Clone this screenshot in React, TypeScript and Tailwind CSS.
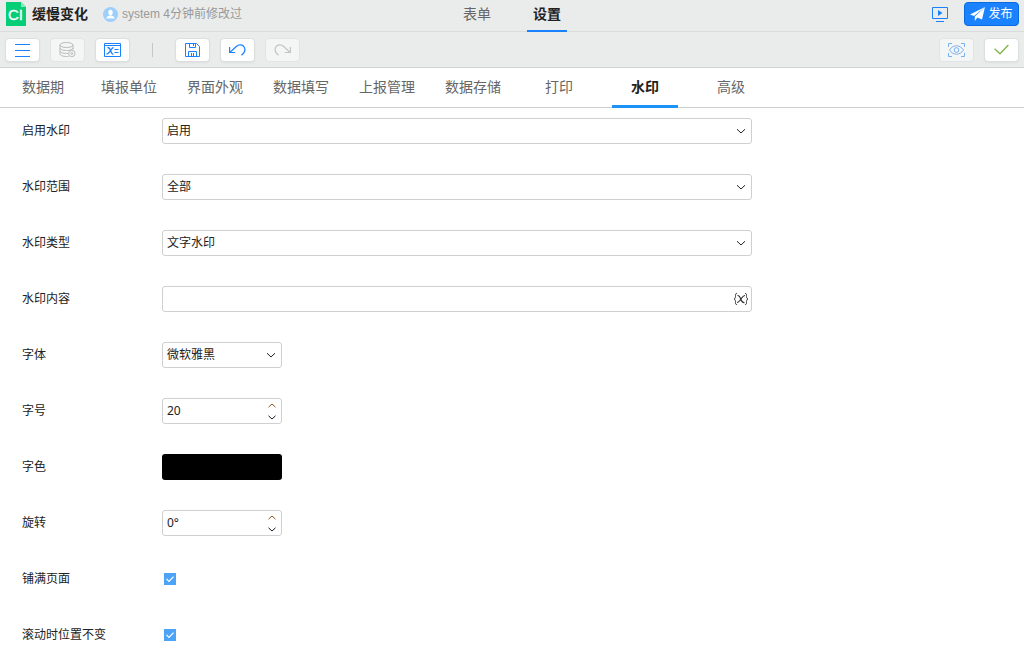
import React, { useState } from 'react';

const headerTabs = ['表单', '设置'];
const settingTabs = ['数据期', '填报单位', '界面外观', '数据填写', '上报管理', '数据存储', '打印', '水印', '高级'];

const ToolButton: React.FC<{ label: string; disabled?: boolean; children: React.ReactNode }> = ({ label, disabled, children }) => (
  <button
    type="button"
    aria-label={label}
    disabled={disabled}
    className={`flex h-6 w-[35px] items-center justify-center rounded-[4px] border ${
      disabled ? 'border-[#e1e4e3] bg-[#f4f6f5]' : 'border-[#dcdfde] bg-white shadow-xs'
    }`}
  >
    {children}
  </button>
);

const Row: React.FC<{ id: string; label: string; children: React.ReactNode }> = ({ id, label, children }) => (
  <div className="flex h-[26px] items-center">
    <label htmlFor={id} className="w-[140px] shrink-0">{label}</label>
    {children}
  </div>
);

const SelectBox: React.FC<{ id: string; options: string[]; narrow?: boolean }> = ({ id, options, narrow }) => (
  <div className={`relative h-[26px] w-full ${narrow ? 'max-w-[120px]' : 'max-w-[590px]'}`}>
    <select id={id} className="block h-full w-full appearance-none rounded-[3px] border border-[#cfcfcf] bg-white pl-1 pr-6 outline-none">
      {options.map((option) => <option key={option}>{option}</option>)}
    </select>
    <svg className="pointer-events-none absolute right-1.5 top-2.5" width="10" height="6" viewBox="0 0 10 6" fill="none" stroke="#222">
      <path d="M1 1.200l4 3.800 4-3.800" />
    </svg>
  </div>
);

const Spinner: React.FC<{ id: string; initial: number; unit?: string }> = ({ id, initial, unit = '' }) => {
  const [value, setValue] = useState(initial);
  return (
    <div className="flex h-[26px] w-[120px] rounded-[3px] border border-[#cfcfcf] bg-white">
      <input
        id={id}
        value={`${value}${unit}`}
        onChange={(e) => setValue(parseInt(e.target.value, 10) || 0)}
        className="w-full min-w-0 pl-1 outline-none"
      />
      <div className="flex w-[18px] shrink-0 flex-col">
        <button type="button" aria-label="增加" onClick={() => setValue(value + 1)} className="flex h-3 items-center justify-center">
          <svg width="8" height="5" viewBox="0 0 8 5" fill="none" stroke="#8a5a20"><path d="M.5 4.200L4 1l3.500 3.200" /></svg>
        </button>
        <button type="button" aria-label="减少" onClick={() => setValue(value - 1)} className="flex h-3 items-center justify-center">
          <svg width="8" height="5" viewBox="0 0 8 5" fill="none" stroke="#2a1530"><path d="M.5.8L4 4 7.500.8" /></svg>
        </button>
      </div>
    </div>
  );
};

const Tick: React.FC<{ id: string }> = ({ id }) => (
  <div className="relative ml-0.5 h-3 w-3">
    <input id={id} type="checkbox" defaultChecked className="peer block h-3 w-3 appearance-none border border-[#4da3f8] checked:bg-[#4da3f8]" />
    <svg className="pointer-events-none absolute inset-0 hidden peer-checked:block" width="12" height="12" viewBox="0 0 12 12" fill="none" stroke="#fff" strokeWidth="1.2">
      <path d="M2.500 5.800l2.500 2.500 4.500-4.600" />
    </svg>
  </div>
);

export default function App() {
  const [page, setPage] = useState('设置');
  const [tab, setTab] = useState('水印');

  return (
    <div className="min-h-screen bg-white font-['Noto_Sans','Noto_Sans_CJK_SC',sans-serif] text-xs text-[#222]">
      <header className="grid h-8 grid-cols-[1fr_auto_1fr] border-b border-[#dadcdb] bg-[#eaeceb]">
        <div className="flex items-center pb-1 pl-1.5">
          <svg width="20" height="24" viewBox="0 0 20 24" className="shrink-0">
            <path d="M0 0h15l5 5v19H0z" fill="#06ce76" />
            <path d="M15 0v5h5z" fill="#8be8bd" />
            <text x="2" y="18" fontSize="15" fill="#fff" stroke="#fff" strokeWidth=".3" fontFamily="Liberation Sans, sans-serif">CI</text>
          </svg>
          <h1 className="ml-1.5 text-sm leading-5 font-bold">缓慢变化</h1>
          <svg width="15" height="15" viewBox="0 0 15 15" className="ml-[15px] shrink-0">
            <circle cx="7.500" cy="7.500" r="7.500" fill="#9dcffc" />
            <ellipse cx="7.500" cy="5.500" rx="2.200" ry="2.700" fill="#fff" />
            <path d="M3.300 11.500c0-2 2-2.500 3.200-3h2c1.200.5 3.200 1 3.200 3z" fill="#fff" />
          </svg>
          <span className="ml-1 font-['Liberation_Sans','Noto_Sans_CJK_SC',sans-serif] whitespace-nowrap text-[#999]">system 4分钟前修改过</span>
        </div>
        <nav className="flex gap-[30px]">
          {headerTabs.map((name) => (
            <button
              key={name}
              type="button"
              onClick={() => setPage(name)}
              className={`h-8 w-10 border-b-2 pb-0.5 text-sm ${page === name ? 'border-[#1a82ff] font-bold text-[#222]' : 'border-transparent text-[#666]'}`}
            >
              {name}
            </button>
          ))}
        </nav>
        <div className="flex items-center justify-end gap-4 pr-[5px] pb-1">
          <button type="button" aria-label="预览">
            <svg width="16" height="15" viewBox="0 0 16 15" fill="none" stroke="#1a82ff">
              <path d="M.5.5h15v11H.5zM4 14.500h8" />
              <path d="M6 3v6l4.500-3z" fill="#1a82ff" stroke="none" />
            </svg>
          </button>
          <button type="button" className="flex h-6 w-[55px] items-center justify-center gap-[3px] rounded-[4px] border border-[#0a6be0] bg-[#1a82ff] text-white">
            <svg width="15" height="14" viewBox="0 0 15 14" fill="#fff">
              <path d="M15 0L0 7.500l4 1.500z" />
              <path d="M15 0L4.800 9.500V14l2.400-3.200z" />
              <path d="M15 0L6.200 10 12 12.500z" />
            </svg>
            发布
          </button>
        </div>
      </header>

      <div className="flex h-9 items-center justify-between border-b border-[#cfd1d0] bg-[#eaeceb] px-[5px]">
        <div className="flex items-center gap-2.5">
          <ToolButton label="菜单">
            <svg width="15" height="14" viewBox="0 0 15 14" stroke="#1a82ff"><path d="M0 1.500h15M0 7.500h15M0 13.500h15" /></svg>
          </ToolButton>
          <ToolButton label="数据源" disabled>
            <svg width="17" height="16" viewBox="0 0 17 16" fill="none" stroke="#b9bcbb">
              <ellipse cx="7.500" cy="3" rx="6.500" ry="2.500" />
              <path d="M1 3v9c0 1.400 3 2.500 6.500 2.500.8 0 1.600 0 2.300-.2M14 3v4.500M1 6c0 1.400 3 2.500 6.500 2.500S14 7.400 14 6M1 9c0 1.400 3 2.500 6.500 2.500l1.500-.1" />
              <circle cx="12.800" cy="11.500" r="3.200" fill="#f4f6f5" />
              <circle cx="12.800" cy="11.500" r="1" />
            </svg>
          </ToolButton>
          <ToolButton label="参数">
            <svg width="17" height="14" viewBox="0 0 17 14" fill="none" stroke="#1a82ff">
              <path d="M.5.5h16v13H.5zM.5 2.500h16" />
              <path d="M3.500 4.500c4-.5 2.500 7.500 6 6.500M9.500 4.500C7.500 4.500 5.500 11 2.500 11" strokeWidth="1.300" />
              <path d="M10.500 6.500h4M10.500 9.500h4" />
            </svg>
          </ToolButton>
          <div className="mx-3 h-3.5 w-px bg-[#c5c7c6]" />
          <ToolButton label="保存">
            <svg width="15" height="14" viewBox="0 0 15 14" fill="none" stroke="#1a82ff">
              <path d="M.5.500h11l3 3v10H.5zM4.500.5v4h6v-4M8.500 1v2M3.500 13.500v-5h8v5M6.500 10v3.500M8.500 10v3.500" />
            </svg>
          </ToolButton>
          <ToolButton label="撤销">
            <svg width="17" height="14" viewBox="0 0 17 14" fill="none" stroke="#1a82ff" strokeWidth="1.200">
              <path d="M.6 4v5.500h5.600M.8 9.500L7.300 3.500c3-2.700 6.700-1.700 8 .7 1.300 2.800 0 6-2.800 8" />
            </svg>
          </ToolButton>
          <ToolButton label="重做" disabled>
            <svg width="17" height="14" viewBox="0 0 17 14" fill="none" stroke="#c2c5c4" strokeWidth="1.200">
              <path d="M16.400 4v5.500h-5.600M16.200 9.500L9.700 3.500C6.700.8 3 1.800 1.700 4.200c-1.300 2.800 0 6 2.800 8" />
            </svg>
          </ToolButton>
        </div>
        <div className="flex gap-2.5">
          <ToolButton label="查看" disabled>
            <svg width="17" height="14" viewBox="0 0 17 14" fill="none" stroke="#79b2f2">
              <path d="M.5 4V.5H4M13 .5h3.500V4M.5 10v3.500H4M13 13.500h3.500V10" />
              <path d="M1.500 7c3.500-5.600 10.500-5.600 14 0-3.500 5.600-10.500 5.600-14 0z" />
              <circle cx="8.500" cy="7" r="2.300" />
            </svg>
          </ToolButton>
          <ToolButton label="校验">
            <svg width="15" height="11" viewBox="0 0 15 11" fill="none" stroke="#7fb54a" strokeWidth="1.300"><path d="M.6 4.800L6 9.800 14.400 1" /></svg>
          </ToolButton>
        </div>
      </div>

      <nav className="flex h-10 gap-5 border-b border-[#cfcfcf] pl-2.5">
        {settingTabs.map((name) => (
          <button
            key={name}
            type="button"
            onClick={() => setTab(name)}
            className={`h-10 w-[66px] shrink-0 border-b-3 pt-px text-sm whitespace-nowrap ${tab === name ? 'border-[#1e93f7] font-bold text-[#222]' : 'border-transparent text-[#666]'}`}
          >
            {name}
          </button>
        ))}
      </nav>

      <form className="flex flex-col gap-[30px] px-[22px] pt-2.5 pb-1.5">
        <Row id="enable" label="启用水印"><SelectBox id="enable" options={['启用', '不启用']} /></Row>
        <Row id="range" label="水印范围"><SelectBox id="range" options={['全部']} /></Row>
        <Row id="type" label="水印类型"><SelectBox id="type" options={['文字水印', '图片水印']} /></Row>
        <Row id="content" label="水印内容">
          <div className="flex h-[26px] w-full max-w-[590px] rounded-[3px] border border-[#cfcfcf]">
            <input id="content" className="w-full min-w-0 pl-1 outline-none" />
            <button type="button" aria-label="插入表达式" className="shrink-0 pr-0.5">
              <svg width="16" height="14" viewBox="0 0 16 14" fill="none" stroke="#333">
                <path d="M4 1.500C2.500 1.500 2.500 2 2.500 3.500S2.500 6.500 1 7c1.500.5 1.500 2 1.500 3.500s0 2 1.500 2M12 1.500c1.500 0 1.500.5 1.500 2s0 3 1.500 3.500c-1.500.5-1.500 2-1.500 3.500s0 2-1.500 2" />
                <path d="M4.500 3.500C8.500 3 7 11.500 11.500 10.500M12 3.500C9 3.500 7 10.500 4 10.500" strokeWidth="1.200" />
              </svg>
            </button>
          </div>
        </Row>
        <Row id="font" label="字体"><SelectBox id="font" options={['微软雅黑', '宋体', '黑体']} narrow /></Row>
        <Row id="size" label="字号"><Spinner id="size" initial={20} /></Row>
        <Row id="color" label="字色">
          <input
            id="color"
            type="color"
            defaultValue="#000000"
            className="h-[26px] w-[120px] appearance-none overflow-hidden rounded-[3px] [&::-webkit-color-swatch]:border-0 [&::-webkit-color-swatch-wrapper]:p-0"
          />
        </Row>
        <Row id="rotate" label="旋转"><Spinner id="rotate" initial={0} unit="°" /></Row>
        <Row id="fill" label="铺满页面"><Tick id="fill" /></Row>
        <Row id="fixed" label="滚动时位置不变"><Tick id="fixed" /></Row>
      </form>
    </div>
  );
}
